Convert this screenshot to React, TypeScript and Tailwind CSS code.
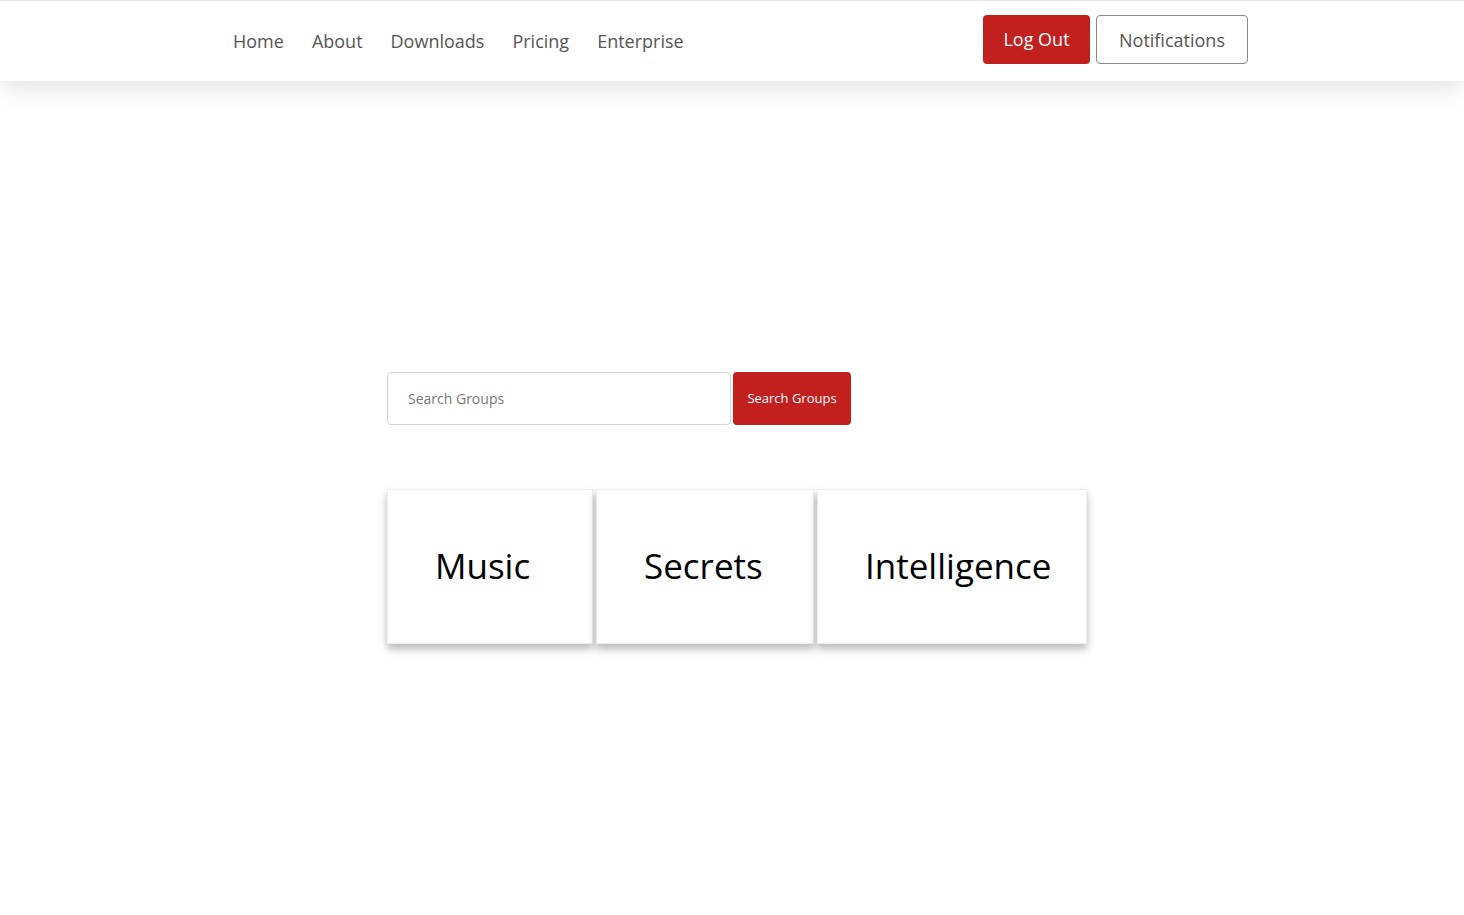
import React from "react";

const font = { fontFamily: '"Open Sans", "Liberation Sans", sans-serif' };

function NavBar() {
  const links = ["Home", "About", "Downloads", "Pricing", "Enterprise"];
  return (
    <header className="relative z-10 flex h-[81px] items-center border-t border-[#e5e5e5] bg-white pl-[233px] pr-[216px] shadow-[0_6px_24px_rgba(0,0,0,0.12)]">
      <nav className="flex items-center gap-[28px]">
        {links.map((l) => (
          <a key={l} href="#" className="text-[18px] text-[#555]">
            {l}
          </a>
        ))}
      </nav>
      <div className="mb-[4px] ml-auto flex items-center gap-[6px]">
        <button className="h-[49px] w-[107px] rounded-[4px] bg-[#c21f1f] text-[18px] text-white">
          Log Out
        </button>
        <button className="h-[49px] w-[152px] rounded-[4px] border border-[#8a8a8a] bg-white pt-[3px] text-[18px] text-[#555]">
          Notifications
        </button>
      </div>
    </header>
  );
}

function Card({ title, w }: { title: string; w: string }) {
  return (
    <div
      className={`flex h-[155px] items-center border border-[#eee] bg-white pl-[47px] text-[35px] text-black shadow-[0_5px_8px_rgba(0,0,0,0.28)] ${w}`}
    >
      {title}
    </div>
  );
}

export default function App() {
  return (
    <div className="min-h-[915px] bg-white" style={font}>
      <NavBar />
      <main className="pl-[387px] pt-[291px]">
        <div className="flex gap-[2px]">
          <input
            placeholder="Search Groups"
            className="h-[53px] w-[344px] rounded-[4px] border border-[#d4d4d4] px-[20px] text-[14px] text-[#555] placeholder:text-[#777] outline-none"
          />
          <button className="h-[53px] w-[118px] rounded-[4px] bg-[#c21f1f] text-[13px] text-white">
            Search Groups
          </button>
        </div>
        <div className="mt-[64px] flex gap-[3px]">
          <Card title="Music" w="w-[206px]" />
          <Card title="Secrets" w="w-[218px]" />
          <Card title="Intelligence" w="w-[270px]" />
        </div>
      </main>
    </div>
  );
}
